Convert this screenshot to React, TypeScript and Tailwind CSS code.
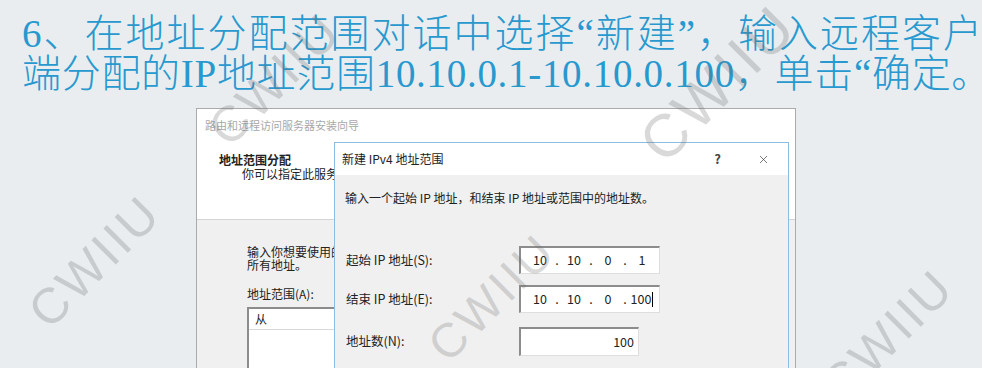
import { X } from 'lucide-react'

const WATERMARKS = [
  { x: 95, y: 262, size: 'text-[50px]' },
  { x: 275, y: 80, size: 'text-[50px]' },
  { x: 718, y: 84, size: 'text-[60px]' },
  { x: 492, y: 298, size: 'text-[48px]' },
  { x: 888, y: 336, size: 'text-[50px]' },
]

function Watermark({ x, y, size }: { x: number; y: number; size: string }) {
  return (
    <div className="pointer-events-none absolute h-0 w-0" style={{ left: x, top: y }}>
      <span
        className={`absolute left-0 top-0 -translate-x-1/2 -translate-y-1/2 -rotate-45 whitespace-nowrap font-['Liberation_Sans',sans-serif] tracking-[3px] text-[rgba(110,110,110,0.26)] ${size}`}
      >
        CWIIU
      </span>
    </div>
  )
}

function IpField({ parts, caret }: { parts: string[]; caret?: boolean }) {
  return (
    <div className="flex h-[28px] w-[141px] items-center border-b border-l-2 border-r border-t-2 border-b-[#dedede] border-l-[#8c8c8c] border-r-[#dedede] border-t-[#8c8c8c] bg-white pl-[5px] text-[12.5px] text-[#222]">
      {parts.map((p, i) => (
        <div key={i} className="flex">
          {i > 0 && <span className="w-[6px] text-center">.</span>}
          <span className="flex w-[28px] justify-center">
            {p}
            {caret && i === 3 && <span className="ml-[1px] mt-[2px] inline-block h-[15px] w-px bg-black" />}
          </span>
        </div>
      ))}
    </div>
  )
}

export default function App() {
  return (
    <div className="relative h-[368px] w-[982px] overflow-hidden bg-[#e9edef]">
      {/* 标题 */}
      <div className="px-[22px] pt-[14px] font-['Liberation_Serif','Noto_Sans_CJK_SC',serif] text-[39px] font-light leading-[40px] text-[#2899cf]">
        <p className="whitespace-nowrap tracking-[2px]">6、在地址分配范围对话中选择“新建”，输入远程客户</p>
        <p className="whitespace-nowrap tracking-[0.7px]">端分配的IP地址范围10.10.0.1-10.10.0.100，单击“确定。</p>
      </div>

      {/* 安装向导窗口 */}
      <div className="relative ml-[196px] mt-[14px] flex h-[280px] w-[600px] flex-col border border-[#ababab] bg-white font-['Noto_Sans_CJK_SC','Liberation_Sans',sans-serif] text-[#222]">
        <div className="h-[34px] px-[8px] pt-[8px] text-[11px] leading-[16px] text-[#a8a8a8]">路由和远程访问服务器安装向导</div>
        <div className="h-[78px] border-b border-[#d5d5d5] pt-[10px] text-[12px]">
          <p className="pl-[22px] font-bold leading-[14px]">地址范围分配</p>
          <p className="pl-[45px] leading-[13px]">你可以指定此服务器用来给远程客户端分配地址的地址范围。</p>
        </div>
        <div className="flex-1 bg-[#f0f0f0] pl-[50px] pt-[25px] text-[12px]">
          <p className="whitespace-nowrap leading-[13px]">输入你想要使用的地址范围(静态池)。在用到下一个之前，此服务器将用第一个范围内的</p>
          <p className="leading-[13px]">所有地址。</p>
          <p className="mt-[16px] leading-[14px]">地址范围(A):</p>
          <div className="mt-[6px] h-[80px] w-[320px] border-l-2 border-t-2 border-[#8c8c8c] bg-white">
            <div className="h-[21px] border-b border-[#d8d8d8] pl-[6px] leading-[20px]">从</div>
          </div>
        </div>

        {/* 新建 IPv4 地址范围 对话框 */}
        <div className="absolute left-[137px] top-[33px] flex h-[260px] w-[455px] flex-col border border-[#8bbde3] bg-[#f0f0f0]">
          <div className="flex h-[32px] items-center bg-white pl-[7px] text-[12px]">
            <span>新建 IPv4 地址范围</span>
            <span className="ml-auto text-[13px] font-bold text-[#444]">?</span>
            <span className="ml-[36px] mr-[18px] text-[#333]">
              <X size={13} strokeWidth={1.2} />
            </span>
          </div>
          <div className="pl-[10px] pt-[15px]">
            <p className="text-[12px] leading-[16px]">输入一个起始 IP 地址，和结束 IP 地址或范围中的地址数。</p>
            <div className="mt-[40px] flex items-center">
              <span className="w-[174px] pl-[1px] text-[12.5px]">起始 IP 地址(S):</span>
              <IpField parts={['10', '10', '0', '1']} />
            </div>
            <div className="mt-[11px] flex items-center">
              <span className="w-[174px] pl-[1px] text-[12.5px]">结束 IP 地址(E):</span>
              <IpField parts={['10', '10', '0', '100']} caret />
            </div>
            <div className="mt-[14px] flex items-center">
              <span className="w-[174px] pl-[1px] text-[12.5px]">地址数(N):</span>
              <div className="flex h-[29px] w-[120px] items-center justify-end border-b border-l-2 border-r border-t-2 border-b-[#dedede] border-l-[#8c8c8c] border-r-[#dedede] border-t-[#8c8c8c] bg-white pr-[4px] text-[12.5px]">
                100
              </div>
            </div>
          </div>
        </div>
      </div>

      {WATERMARKS.map((w, i) => (
        <Watermark key={i} {...w} />
      ))}
    </div>
  )
}
